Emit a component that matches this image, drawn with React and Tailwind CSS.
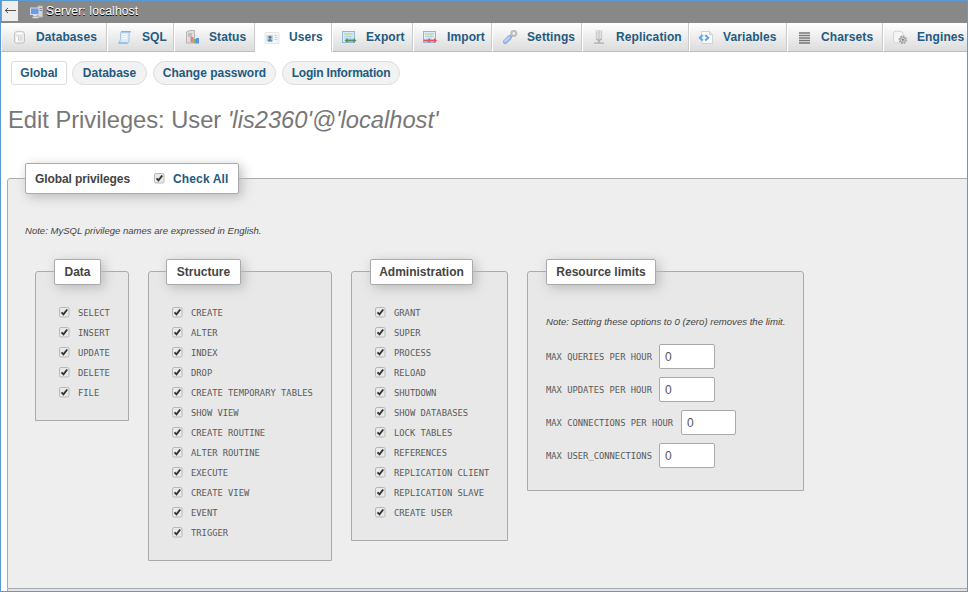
import React from 'react';

const Svg = ({ children }) => (
  <svg width="16" height="16" viewBox="0 0 16 16" className="block shrink-0">{children}</svg>
);

const icons = {
  database: (
    <Svg>
      <path d="M3.500 4.500C3.500 1.500 13.500 1.500 13.500 4.500V12.500c0 2.500-10 2.500-10 0z" fill="#ececec" stroke="#c2c2c2" />
      <ellipse cx="8.500" cy="4.500" rx="4.300" ry="1.800" fill="#fdfdfd" stroke="#cfcfcf" strokeWidth=".7" />
      <path d="M6 8v5" stroke="#fff" strokeWidth="2" />
      <path d="M7.500 7.500v4M10 7.500v4" stroke="#c2c2c2" strokeWidth=".8" />
    </Svg>
  ),
  sql: (
    <Svg>
      <path d="M4.500 2.500h9c-1.500 1-1.500 3-1.500 5 0 3 .5 4.500-1 6.500H1.500c1.500-1 2-3 2-5.500 0-2.500-.3-4.500 1-6z" fill="#dcebfa" stroke="#9cc2e6" />
      <path d="M4 2.800h9.500M1.500 14h9" stroke="#7fb0de" strokeWidth="1.200" />
      <path d="M5.500 5.500h4.500M5.500 7.500h4.500M5.500 9.500h4.500" stroke="#f7fbff" />
    </Svg>
  ),
  status: (
    <Svg>
      <path d="M2.500 3l3-1.500h5v11.500l-2 1H2.500z" fill="#dedede" stroke="#b5b5b5" />
      <path d="M4 5h4M4 7h4" stroke="#a0a0a0" />
      <rect x="6.500" y="8" width="3" height="5.500" fill="#ea8178" />
      <rect x="9.500" y="10" width="3" height="4.500" fill="#5fbf62" />
      <rect x="12" y="9" width="3" height="5.500" fill="#5b93ea" />
    </Svg>
  ),
  users: (
    <Svg>
      <rect x="1" y="2.500" width="14" height="11" rx="1" fill="#f6f6f6" stroke="#e6e6e6" />
      <rect x="2.500" y="5" width="6.500" height="6.500" fill="#b5d6f2" />
      <circle cx="6" cy="7.300" r="1.500" fill="#8a6a58" />
      <path d="M3.800 11.500c0-3.200 4.400-3.200 4.400 0z" fill="#4c8ccb" />
      <path d="M10.500 5.500h3M10.500 7.500h3M10.500 9.500h3" stroke="#d0d0d0" />
    </Svg>
  ),
  export: (
    <Svg>
      <rect x="1.500" y="2.500" width="12" height="11" fill="#dfebf8" stroke="#94b6dc" />
      <rect x="3" y="4" width="9" height="2" fill="#c1e0b2" />
      <path d="M3 7.500h9M3 9.500h9M6 6v7M9 6v7" stroke="#b0cae5" strokeWidth=".8" />
      <path d="M5 11.500h9" stroke="#4f944e" strokeWidth="2" />
      <path d="M6.500 9v5l-3-2.500zM12.500 9v5l3-2.500z" fill="#4f944e" />
    </Svg>
  ),
  import: (
    <Svg>
      <rect x="1.500" y="2.500" width="12" height="11" fill="#dfebf8" stroke="#94b6dc" />
      <rect x="3" y="4" width="9" height="2" fill="#c1e0b2" />
      <path d="M3 7.500h9M6 6v7M9 6v7" stroke="#b0cae5" strokeWidth=".8" />
      <path d="M1.500 11.500h12" stroke="#f05058" strokeWidth="2" />
      <path d="M8 9v5l-3-2.500zM12 9v5l3-2.500z" fill="#f05058" />
    </Svg>
  ),
  settings: (
    <Svg>
      <path d="M7.500 8.500l3-3" stroke="#bababa" strokeWidth="3" />
      <circle cx="11.800" cy="4.500" r="2.400" fill="none" stroke="#bcbcbc" strokeWidth="2" />
      <path d="M3.200 12.800l4.300-4.300" stroke="#8fb0e3" strokeWidth="4.600" strokeLinecap="round" />
      <path d="M3.200 12.300l3.800-3.800" stroke="#bfd5f3" strokeWidth="2" strokeLinecap="round" />
    </Svg>
  ),
  replication: (
    <Svg>
      <path d="M5.500 1.500v9M10.500 1.500v9" stroke="#cccccc" strokeWidth="1.300" />
      <path d="M8 1v13" stroke="#bcbcbc" strokeWidth="2.400" />
      <path d="M8 1v10" stroke="#f2f2f2" strokeWidth=".8" />
      <path d="M5.500 10l2.500 1.500 2.500-1.500M3 14.200h10" fill="none" stroke="#adadad" strokeWidth="1.200" />
    </Svg>
  ),
  variables: (
    <Svg>
      <path d="M3.500 2.500h8l3 3v9h-11z" fill="#fafafa" stroke="#d2d2d2" />
      <path d="M11.500 2.500v3h3" fill="#e8e8e8" stroke="#ccc" />
      <path d="M4.800 6L1.800 8.700l3 2.700M7.200 6l3 2.700-3 2.700" fill="none" stroke="#62a3e4" strokeWidth="2" />
    </Svg>
  ),
  charsets: (
    <Svg>
      <path d="M3 4h11M3 6.500h11M3 9h11M3 11.500h11M3 14h11" stroke="#777" strokeWidth="1.500" />
    </Svg>
  ),
  engines: (
    <Svg>
      <path d="M1.500 4c0-2.500 9.500-2.500 9.500 0v9c-2 1.300-7.500 1.300-9.500 0z" fill="#f5f5f5" stroke="#d4d4d4" />
      <circle cx="10.800" cy="10.800" r="3.500" fill="#d8d8d8" stroke="#a2a2a2" strokeWidth="1.600" strokeDasharray="1.700 1" />
      <circle cx="10.800" cy="10.800" r="2.500" fill="#d4d4d4" stroke="#a5a5a5" />
      <circle cx="10.800" cy="10.800" r="1" fill="#777" />
    </Svg>
  ),
};

const tabs = [
  ['database', 'Databases', 'w-[106px] pl-[9px]'],
  ['sql', 'SQL', 'w-[67px] pl-[9px]'],
  ['status', 'Status', 'w-[81px] pl-[9px]'],
  ['users', 'Users', 'w-[77px] pl-[8px]'],
  ['export', 'Export', 'w-[81px] pl-[8px]'],
  ['import', 'Import', 'w-[79px] pl-[8px]'],
  ['settings', 'Settings', 'w-[90px] pl-[9px]'],
  ['replication', 'Replication', 'w-[107px] pl-[8px]'],
  ['variables', 'Variables', 'w-[98px] pl-[8px]'],
  ['charsets', 'Charsets', 'w-[96px] pl-[8px]'],
  ['engines', 'Engines', 'w-[90px] pl-[8px]'],
];

const pills = [
  ['Global', 'w-[56px] rounded-[3px] bg-white mr-[5px]'],
  ['Database', 'w-[75px] rounded-full bg-[#f2f2f2] mr-[6px]'],
  ['Change password', 'w-[123px] rounded-full bg-[#f2f2f2] mr-[6px]'],
  ['Login Information', 'w-[118px] rounded-full bg-[#f2f2f2] tracking-[-0.2px]'],
];

const groups = [
  {
    title: 'Data',
    box: 'w-[94px] h-[150px]',
    legend: 'w-[47px] ml-[18px]',
    items: ['SELECT', 'INSERT', 'UPDATE', 'DELETE', 'FILE'],
  },
  {
    title: 'Structure',
    box: 'w-[184px] h-[290px]',
    legend: 'w-[75px] ml-[17px]',
    items: ['CREATE', 'ALTER', 'INDEX', 'DROP', 'CREATE TEMPORARY TABLES', 'SHOW VIEW', 'CREATE ROUTINE', 'ALTER ROUTINE', 'EXECUTE', 'CREATE VIEW', 'EVENT', 'TRIGGER'],
  },
  {
    title: 'Administration',
    box: 'w-[157px] h-[270px]',
    legend: 'w-[103px] ml-[18px]',
    items: ['GRANT', 'SUPER', 'PROCESS', 'RELOAD', 'SHUTDOWN', 'SHOW DATABASES', 'LOCK TABLES', 'REFERENCES', 'REPLICATION CLIENT', 'REPLICATION SLAVE', 'CREATE USER'],
  },
];

const limits = [
  ['MAX QUERIES PER HOUR', 'w-[113px]', 'w-[56px]'],
  ['MAX UPDATES PER HOUR', 'w-[113px]', 'w-[56px]'],
  ['MAX CONNECTIONS PER HOUR', 'w-[135px]', 'w-[55px]'],
  ['MAX USER_CONNECTIONS', 'w-[113px]', 'w-[56px]'],
];

const mono = "font-['DejaVu_Sans_Mono',monospace] text-[8.8px] text-[#5a5a5a] whitespace-pre";

const Check = () => (
  <svg width="11" height="11" viewBox="0 0 11 11" className="block shrink-0">
    <rect x=".5" y=".5" width="9.500" height="9.500" rx="1.500" fill="#e9e9e9" stroke="#b8b8b8" />
    <path d="M2.500 5.300l2 2.100L8.200 2.500" fill="none" stroke="#333" strokeWidth="1.900" />
  </svg>
);

const Legend = ({ className, children }) => (
  <div className={`flex shrink-0 items-center rounded-[2px] border border-[#aaa] bg-white font-bold text-[#444] shadow-[3px_3px_12px_#bbb] whitespace-nowrap ${className}`}>
    {children}
  </div>
);

export default function App() {
  return (
    <div className="flex h-[592px] w-[968px] flex-col overflow-hidden border border-[#5b9bd5] bg-white font-['Liberation_Sans',Arial,sans-serif] text-[12px] leading-[14px]">
      <header className="flex h-[22px] shrink-0 items-center bg-[#888]">
        <div className="flex h-[20px] w-[17px] items-start justify-center self-start border-l border-[#999] bg-[#eee] pt-[5px]">
          <svg width="13" height="9" viewBox="0 0 13 9">
            <path d="M1 4.500h11M4 2L1.300 4.500 4 7" fill="none" stroke="#555" />
          </svg>
        </div>
        <svg width="15" height="14" viewBox="0 0 15 14" className="-mt-px ml-[11px]">
          <path d="M9 1h4.500v11H9z" fill="#d7d7d7" stroke="#b2b2b2" />
          <path d="M10 3.500h3M10 5.500h3" stroke="#888" />
          <rect x="1.500" y="3" width="8.500" height="6.500" fill="#6c9be0" stroke="#d0dcec" />
          <path d="M4 10.500h4M3.500 12.500h6" stroke="#ddd" strokeWidth="1.300" />
        </svg>
        <span className="-mt-[2px] ml-[2px] text-[12px] tracking-[0.17px] text-white [text-shadow:0_1px_0_#000]">Server: localhost</span>
      </header>

      <nav className="flex h-[29px] w-[966px] shrink-0 overflow-hidden font-bold text-[#235a81]">
        {tabs.map(([icon, label, layout]) => (
          <div
            key={label}
            className={`flex shrink-0 items-center border-r border-r-[#ccc] border-l border-l-white ${layout} ${
              label === 'Users' ? 'bg-white' : 'border-b border-b-[#bbb] bg-linear-to-b from-white to-[#dcdcdc]'
            }`}
          >
            {icons[icon]}
            <span className={`ml-[9px] tracking-[0.1px] whitespace-nowrap ${label === 'Users' ? '-mt-px' : ''}`}>{label}</span>
          </div>
        ))}
      </nav>

      <div className="mt-[9px] flex h-[24px] shrink-0 pl-[10px] font-bold text-[#235a81]">
        {pills.map(([label, style]) => (
          <div key={label} className={`flex items-center justify-center border border-[#ddd] whitespace-nowrap ${style}`}>
            {label}
          </div>
        ))}
      </div>

      <h1 className="mt-[21px] shrink-0 pl-[7px] text-[23.7px] leading-[28px] whitespace-nowrap text-[#777]">
        Edit Privileges: User <i>'lis2360'@'localhost'</i>
      </h1>

      <main className="mt-[44px] ml-[6px] h-[411px] w-[970px] shrink-0 rounded-tl-[3px] border border-[#aaa] bg-[#eee]">
        <Legend className="-mt-[16px] ml-[17px] h-[31px] w-[214px] pl-[9px]">
          <span className="w-[119px] tracking-[-0.1px]">Global privileges</span>
          <Check />
          <span className="ml-[8px] tracking-[0.15px] text-[#235a81]">Check All</span>
        </Legend>
        <p className="mt-[31px] ml-[17px] text-[9.550px] leading-[12px] whitespace-nowrap text-[#444] italic">
          Note: MySQL privilege names are expressed in English.
        </p>
        <div className="mt-[34px] ml-[27px] flex items-start gap-[19px]">
          {groups.map((g) => (
            <section key={g.title} className={`shrink-0 rounded-t-[3px] border border-[#aaa] bg-[#e8e8e8] ${g.box}`}>
              <Legend className={`-mt-[13px] h-[26px] justify-center ${g.legend}`}>{g.title}</Legend>
              <ul className="mt-[17px] pl-[23px]">
                {g.items.map((item) => (
                  <li key={item} className="flex h-[20px] items-center">
                    <Check />
                    <span className={`ml-[8px] pt-[2px] ${mono}`}>{item}</span>
                  </li>
                ))}
              </ul>
            </section>
          ))}
          <section className="h-[220px] w-[277px] shrink-0 rounded-t-[3px] border border-[#aaa] bg-[#e8e8e8]">
            <Legend className="-mt-[13px] ml-[18px] h-[26px] w-[110px] justify-center">Resource limits</Legend>
            <p className="mt-[31px] ml-[18px] text-[9.600px] leading-[12px] whitespace-nowrap text-[#444] italic">
              Note: Setting these options to 0 (zero) removes the limit.
            </p>
            <div className="mt-[16px] flex flex-col gap-[8px] pl-[18px]">
              {limits.map(([label, width, field]) => (
                <label key={label} className="flex h-[25px] items-center">
                  <span className={`shrink-0 ${mono} ${width}`}>{label}</span>
                  <input
                    type="text"
                    defaultValue="0"
                    className={`h-[25px] rounded-[2px] border border-[#aaa] bg-white pl-[5px] text-[12px] text-[#555] ${field}`}
                  />
                </label>
              ))}
            </div>
          </section>
        </div>
      </main>
      <footer className="ml-[6px] h-[2px] shrink-0 border-l border-[#aaa] bg-[#dce3ec]" />
    </div>
  );
}
